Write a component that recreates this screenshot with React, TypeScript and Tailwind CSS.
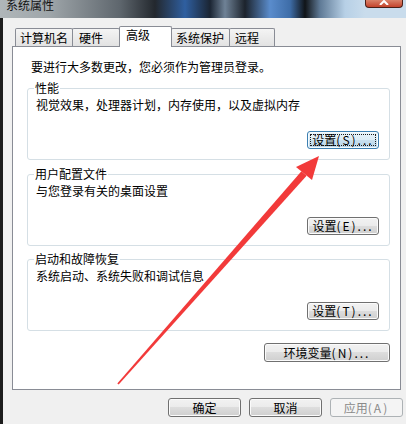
import React from "react";

type BtnKind = "normal" | "focus" | "disabled";

const Btn: React.FC<{ cls: string; kind?: BtnKind; children: React.ReactNode }> = ({
  cls,
  kind = "normal",
  children,
}) => {
  if (kind === "focus") {
    return (
      <div
        className={`${cls} flex p-[2px] rounded-[3px] border border-[#3c7fb1] bg-[linear-gradient(#e8f4fb_0%,#dcecf6_49%,#c8e0ef_50%,#b9d6ea_100%)] shadow-[inset_0_0_0_1px_#f4fafd]`}
      >
        <div className="flex-1 flex items-center justify-center border border-dotted border-[#1a1a1a] text-[12px] leading-[14px] text-black">
          {children}
        </div>
      </div>
    );
  }
  if (kind === "disabled") {
    return (
      <div
        className={`${cls} flex items-center justify-center rounded-[3px] border border-[#adb2b5] bg-[#f4f4f4] text-[12px] leading-[14px] text-[#8a8a8a]`}
      >
        {children}
      </div>
    );
  }
  return (
    <div
      className={`${cls} flex items-center justify-center rounded-[3px] border border-[#707070] bg-[linear-gradient(#f2f2f2_0%,#ebebeb_49%,#dddddd_50%,#cfcfcf_100%)] shadow-[inset_0_0_0_1px_#fbfbfb] text-[12px] leading-[14px] text-black`}
    >
      {children}
    </div>
  );
};

// label like 设置(S)... — the latin part is spread to get closer to SimSun's half-width look
const Lbl: React.FC<{ cjk: string; rest: string }> = ({ cjk, rest }) => (
  <span className="whitespace-nowrap">
    {cjk}
    <span className="tracking-[2px]">{rest}</span>
  </span>
);

const tabs = [
  { label: "计算机名", cls: "w-[58px] h-[18px] pt-[2px] pl-[4px]" },
  { label: "硬件", cls: "w-[48px] h-[18px] pt-[2px] pl-[6px]" },
  { label: "高级", cls: "w-[53px] h-[21px] pt-[1px] pl-[6px]", active: true },
  { label: "系统保护", cls: "w-[59px] h-[18px] pt-[2px] pl-[4px]" },
  { label: "远程", cls: "w-[46px] h-[18px] pt-[2px] pl-[5px]" },
];

const groups = [
  {
    title: "性能",
    desc: "视觉效果，处理器计划，内存使用，以及虚拟内存",
    key: "(S)...",
    kind: "focus" as BtnKind,
    mt: "mt-[7px]",
  },
  {
    title: "用户配置文件",
    desc: "与您登录有关的桌面设置",
    key: "(E)...",
    kind: "normal" as BtnKind,
    mt: "mt-[7px]",
  },
  {
    title: "启动和故障恢复",
    desc: "系统启动、系统失败和调试信息",
    key: "(T)...",
    kind: "normal" as BtnKind,
    mt: "mt-[6px]",
  },
];

export default function App() {
  return (
    <div className="relative w-[406px] h-[424px] overflow-hidden bg-[#f0f0f0] font-['Noto_Sans_CJK_SC',sans-serif] text-[12px] text-black">
      {/* glass title bar */}
      <div className="flex h-[18px] bg-[linear-gradient(90deg,#b0b6b9_0px,#9ea5a9_50px,#5e666d_120px,#23282e_155px,#2f5fa0_185px,#1b2533_210px,#6f8296_225px,#1c232c_245px,#5a8ccc_270px,#3e6da8_290px,#101418_305px,#5f7a96_320px,#b7d0e6_345px,#c9dcec_365px)]">
        <span className="-mt-[1px] ml-[6px] leading-[12px] text-[#141414]">系统属性</span>
        <div className="ml-auto mr-[3px] flex h-[8px] w-[38px] items-start justify-center rounded-b-[4px] border border-t-0 border-[#4b1f17] bg-[linear-gradient(#d9826a,#c4442c)]">
          <svg width="10" height="5" viewBox="0 0 10 5">
            <path d="M1 5 L5 1 L9 5" stroke="#fff" strokeWidth="2" fill="none" />
          </svg>
        </div>
      </div>

      <div className="flex h-[406px]">
        <div className="w-[3px] bg-[#1c1c1c]" />
        <div className="flex flex-1 flex-col">
          <div className="ml-[9px] mt-[8px] flex flex-col">
            {/* tabs */}
            <div className="flex h-[20px] items-end pl-[3px]">
              {tabs.map((t, i) => (
                <div
                  key={t.label}
                  className={`${t.cls} ${i > 0 ? "-ml-px" : ""} leading-[14px] rounded-t-[2px] border border-b-0 border-[#898c95] ${
                    t.active ? "relative z-10 -mb-px bg-white" : "bg-[linear-gradient(#f4f4f4,#e2e2e2)]"
                  }`}
                >
                  {t.label}
                </div>
              ))}
            </div>

            {/* tab panel */}
            <div className="flex h-[344px] w-[389px] flex-col border border-[#898c95] bg-white pl-[14px]">
              <div className="ml-[4px] mt-[13px] leading-[14px]">要进行大多数更改，您必须作为管理员登录。</div>

              {groups.map((g) => (
                <fieldset
                  key={g.title}
                  className={`${g.mt} w-[363px] rounded-[3px] border border-[#d5dfe5] pb-[10px] pl-[8px] pr-[10px]`}
                >
                  <legend className="-ml-[2px] px-[1px] leading-[14px]">{g.title}</legend>
                  <div className="mt-[3px] leading-[14px]">{g.desc}</div>
                  <div className="mt-[19px] flex justify-end">
                    <Btn cls="h-[18px] w-[72px]" kind={g.kind}>
                      <Lbl cjk="设置" rest={g.key} />
                    </Btn>
                  </div>
                </fieldset>
              ))}

              <div className="mt-[12px] flex w-[363px] justify-end">
                <Btn cls="h-[19px] w-[126px]">
                  <Lbl cjk="环境变量" rest="(N)..." />
                </Btn>
              </div>
            </div>
          </div>

          {/* dialog buttons */}
          <div className="mt-[8px] flex justify-end gap-[8px] pr-[3px]">
            <Btn cls="h-[19px] w-[73px]">确定</Btn>
            <Btn cls="h-[19px] w-[73px]">取消</Btn>
            <Btn cls="h-[19px] w-[73px]" kind="disabled">
              <Lbl cjk="应用" rest="(A)" />
            </Btn>
          </div>
        </div>
      </div>

      {/* red annotation arrow drawn over the dialog */}
      <svg className="pointer-events-none absolute left-0 top-0" width="406" height="424" viewBox="0 0 406 424">
        <polygon points="306.6,175.8 301.4,171.2 117.3,383.4 118.7,384.6" fill="#f23a3a" />
        <polygon points="319,156 296,167 312,180" fill="#f23a3a" />
      </svg>
    </div>
  );
}
